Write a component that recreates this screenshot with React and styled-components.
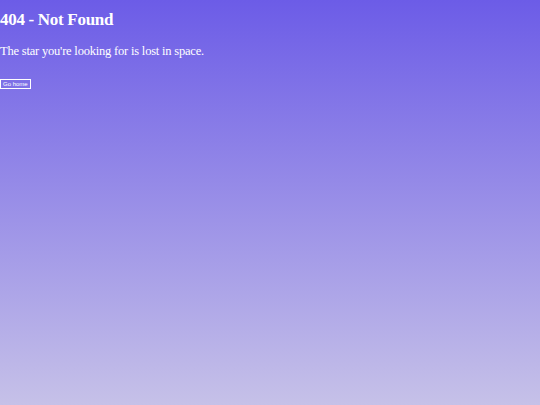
import styled, { createGlobalStyle } from 'styled-components';

const GlobalStyle = createGlobalStyle`
  html, body {
    margin: 0;
    padding: 0;
  }
  body {
    font-family: "Liberation Serif", "Times New Roman", serif;
  }
`;

const Page = styled.div`
  min-height: 405px;
  background: linear-gradient(180deg, #6c5ce7 0%, #c6c1e8 100%);
  color: #ffffff;
  padding-top: 10px;
  box-sizing: border-box;
`;

const Title = styled.h1`
  margin: 0;
  font-size: 17px;
  line-height: 20px;
  font-weight: bold;
  letter-spacing: -0.3px;
`;

const Message = styled.p`
  margin: 11px 0 0;
  font-size: 12.5px;
  line-height: 20px;
  letter-spacing: -0.2px;
`;

const HomeButton = styled.button`
  display: block;
  margin-top: 18px;
  padding: 0 2px;
  height: 10px;
  background: transparent;
  border: 1px solid #ffffff;
  color: #ffffff;
  font-family: "Liberation Sans", Arial, sans-serif;
  font-size: 6px;
  line-height: 7px;
  cursor: pointer;
`;

export default function App() {
  return (
    <>
      <GlobalStyle />
      <Page>
        <Title>404 - Not Found</Title>
        <Message>The star you're looking for is lost in space.</Message>
        <HomeButton>Go home</HomeButton>
      </Page>
    </>
  );
}
